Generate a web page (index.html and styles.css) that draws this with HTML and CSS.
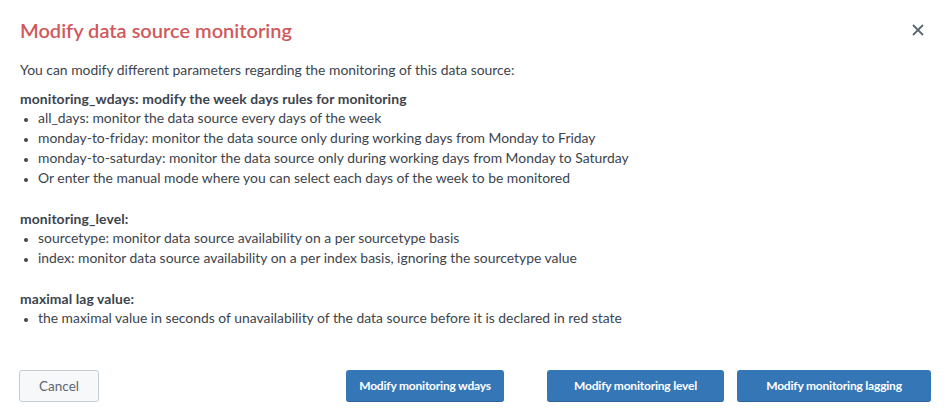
FILE: index.html
```html
<!DOCTYPE html>
<html>
<head>
<meta charset="utf-8">
<link rel="stylesheet" href="styles.css">
</head>
<body>
<div class="modal">
  <div class="modal-header">
    <h3 class="modal-title">Modify data source monitoring</h3>
    <button class="close" aria-label="Close">
      <svg width="12" height="12" viewBox="0 0 12 12"><path d="M1 1 L11 11 M11 1 L1 11" stroke="#5c6773" stroke-width="1.8" fill="none"/></svg>
    </button>
  </div>
  <div class="modal-body">
    <p class="intro">You can modify different parameters regarding the monitoring of this data source:</p>
    <div class="section">
      <div class="heading">monitoring_wdays: modify the week days rules for monitoring</div>
      <ul class="list">
        <li>all_days: monitor the data source every days of the week</li>
        <li>monday-to-friday: monitor the data source only during working days from Monday to Friday</li>
        <li>monday-to-saturday: monitor the data source only during working days from Monday to Saturday</li>
        <li>Or enter the manual mode where you can select each days of the week to be monitored</li>
      </ul>
    </div>
    <div class="section">
      <div class="heading">monitoring_level:</div>
      <ul class="list">
        <li>sourcetype: monitor data source availability on a per sourcetype basis</li>
        <li>index: monitor data source availability on a per index basis, ignoring the sourcetype value</li>
      </ul>
    </div>
    <div class="section">
      <div class="heading">maximal lag value:</div>
      <ul class="list">
        <li>the maximal value in seconds of unavailability of the data source before it is declared in red state</li>
      </ul>
    </div>
  </div>
  <div class="modal-footer">
    <button class="btn btn-default">Cancel</button>
    <div class="actions">
      <button class="btn btn-primary btn-wdays">Modify monitoring wdays</button>
      <button class="btn btn-primary btn-level">Modify monitoring level</button>
      <button class="btn btn-primary btn-lag">Modify monitoring lagging</button>
    </div>
  </div>
</div>
</body>
</html>
```
FILE: styles.css
```css
* { box-sizing: border-box; }
html, body { margin: 0; padding: 0; background: #fff; }
body {
  font-family: Lato, "Open Sans", sans-serif;
  font-size: 13.9px;
  color: #3c444d;
  width: 950px;
  height: 418px;
  overflow: hidden;
}
.modal { display: flex; flex-direction: column; }
.modal-header {
  display: flex;
  align-items: center;
  justify-content: space-between;
  padding: 18px 20px 18px 20px;
}
.modal-title {
  margin: 0;
  font-size: 20px;
  line-height: 24px;
  font-weight: 600;
  color: #d0595c;
}
.close {
  background: none;
  border: 0;
  padding: 0;
  margin-right: 5px;
  width: 14px;
  height: 14px;
  display: flex;
  align-items: center;
  justify-content: center;
  cursor: pointer;
}
.modal-body { padding: 0 20px; }
.intro { margin: 0 0 10px; line-height: 20px; }
.section + .section { margin-top: 22px; }
.heading { font-weight: 700; line-height: 18px; letter-spacing: 0.1px; }
.list { margin: 0; padding-left: 18px; }
.list li { line-height: 20px; }
.list li::marker { font-size: 11px; }
.modal-footer {
  display: flex;
  justify-content: space-between;
  align-items: center;
  padding: 0 19px;
  margin-top: 42px;
}
.actions { display: flex; }
.btn {
  height: 32px;
  border-radius: 3px;
  font-family: inherit;
  font-size: 13.5px;
  padding: 0;
  cursor: pointer;
  text-align: center;
}
.btn-default {
  width: 80px;
  background: #f7f8fa;
  border: 1px solid #c3cbd4;
  color: #5c6773;
}
.btn-primary {
  background: #3577b6;
  border: 0;
  border-bottom: 1px solid #2b639a;
  color: #fff;
  font-weight: 700;
  font-size: 12px;
  letter-spacing: -0.2px;
}
.btn-wdays { width: 158px; }
.btn-level { width: 177px; margin-left: 43px; }
.btn-lag { width: 194px; margin-left: 13px; }
```
